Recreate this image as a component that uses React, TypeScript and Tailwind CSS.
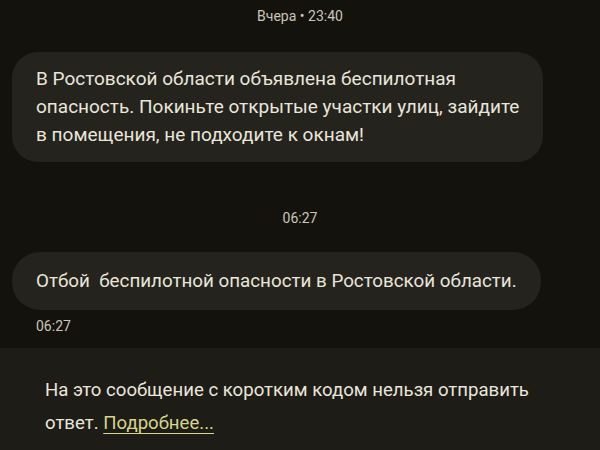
import React from "react";

const font = { fontFamily: "Roboto, 'Noto Sans', sans-serif" };

export default function App() {
  return (
    <div
      className="flex h-[450px] w-[600px] flex-col overflow-hidden bg-[#13120c] text-[#e9e6db]"
      style={font}
    >
      <div className="flex flex-1 flex-col px-3">
        <p className="mt-[7px] text-center text-[14px] leading-[18px] text-[#c9c6bb]">
          Вчера • 23:40
        </p>

        {/* входящее сообщение */}
        <div className="mt-[27px] w-[531px] whitespace-nowrap rounded-[26px] bg-[#24231d] px-6 py-[13px] text-[19px] leading-[28px]">
          В Ростовской области объявлена беспилотная
          <br />
          опасность. Покиньте открытые участки улиц, зайдите
          <br />
          в помещения, не подходите к окнам!
        </div>

        <p className="mt-[47px] text-center text-[14px] leading-[18px] text-[#c9c6bb]">
          06:27
        </p>

        <div className="mt-[25px] self-start whitespace-nowrap rounded-[28px] bg-[#24231d] px-6 py-[15px] text-[18.8px] leading-[28px]">
          Отбой&nbsp; беспилотной опасности в Ростовской области.
        </div>

        <p className="mt-[7px] pl-6 text-[14px] leading-[18px] text-[#c9c6bb]">
          06:27
        </p>
      </div>

      {/* плашка: ответ невозможен */}
      <div className="h-[102px] shrink-0 whitespace-nowrap bg-[#1d1c17] px-[45px] pt-[26px] text-[18.6px] leading-[33px]">
        На это сообщение с коротким кодом нельзя отправить
        <br />
        ответ.{" "}
        <a className="text-[#d7d58b] underline underline-offset-4" href="#">
          Подробнее...
        </a>
      </div>
    </div>
  );
}
